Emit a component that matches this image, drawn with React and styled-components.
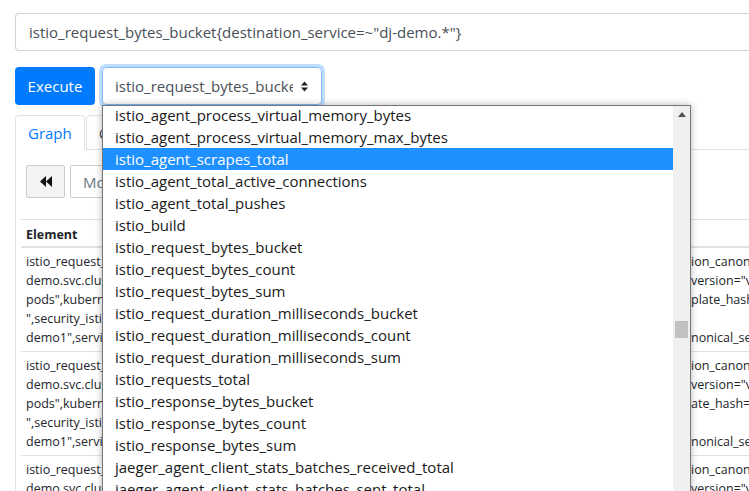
import styled, { createGlobalStyle } from "styled-components";

const metrics = [
  "istio_agent_process_virtual_memory_bytes",
  "istio_agent_process_virtual_memory_max_bytes",
  "istio_agent_scrapes_total",
  "istio_agent_total_active_connections",
  "istio_agent_total_pushes",
  "istio_build",
  "istio_request_bytes_bucket",
  "istio_request_bytes_count",
  "istio_request_bytes_sum",
  "istio_request_duration_milliseconds_bucket",
  "istio_request_duration_milliseconds_count",
  "istio_request_duration_milliseconds_sum",
  "istio_requests_total",
  "istio_response_bytes_bucket",
  "istio_response_bytes_count",
  "istio_response_bytes_sum",
  "jaeger_agent_client_stats_batches_received_total",
  "jaeger_agent_client_stats_batches_sent_total",
  "jaeger_agent_client_stats_batches_total",
];

const seriesRows = [
  {
    lines: [
      ['istio_request_bytes_bucket{app="dj-demo",connection_security_policy="mutual_tls",destination_app="dj-', "ion_canonical_name"],
      ['demo.svc.cluster.local",instance="10.1.2.34:15020",job="kubernetes-', 'version="v1"'],
      ['pods",kubernetes_namespace="dj-demo",kubernetes_pod_name="dj-demo1-7c9d",pod_template_hash', "plate_hash"],
      ['",security_istio_io_tlsMode="istio",service_istio_io_canonical_name="dj-', ""],
      ['demo1",service_istio_io_canonical_revision="v1",source_app="dj-demo1",source_ca', "nonical_service"],
    ],
  },
  {
    lines: [
      ['istio_request_bytes_bucket{app="dj-demo",connection_security_policy="mutual_tls",destination_app="dj-', "ion_canonical_name"],
      ['demo.svc.cluster.local",instance="10.1.2.35:15020",job="kubernetes-', 'version="v1"'],
      ['pods",kubernetes_namespace="dj-demo",kubernetes_pod_name="dj-demo1-7c9d",pod_template_hash', 'ate_hash="'],
      ['",security_istio_io_tlsMode="istio",service_istio_io_canonical_name="dj-', ""],
      ['demo1",service_istio_io_canonical_revision="v1",source_app="dj-demo1",source_ca', "nonical_service"],
    ],
  },
  {
    lines: [
      ['istio_request_bytes_bucket{app="dj-demo",connection_security_policy="mutual_tls",destination_app="dj-', "ion_canonical_name"],
      ['demo.svc.cluster.local",instance="10.1.2.36:15020",job="kubernetes-', 'version="v1"'],
      ['pods",kubernetes_namespace="dj-demo",kubernetes_pod_name="dj-demo1-7c9d",pod_template_hash', "plate_hash"],
    ],
  },
];

export default function App() {
  return (
    <>
      <GlobalStyle />
      <Page>
        <ExpressionInput>
          istio_request_bytes_bucket{"{"}destination_service=~"dj-demo.*"{"}"}
        </ExpressionInput>
        <ControlRow>
          <ExecuteButton>Execute</ExecuteButton>
          <SelectWrap>
            <SelectValue>istio_request_bytes_bucket</SelectValue>
            <svg width="7" height="11" viewBox="0 0 7 11">
              <polygon points="0,4.5 3.5,0.5 7,4.5" fill="#222" />
              <polygon points="0,6.5 3.5,10.5 7,6.5" fill="#222" />
            </svg>
            <Dropdown>
              <Options>
                {metrics.map((m, i) => (
                  <Option key={m} $active={i === 2}>
                    {m}
                  </Option>
                ))}
              </Options>
              <Scrollbar>
                <ScrollArrow>
                  <svg width="8" height="5" viewBox="0 0 8 5">
                    <polygon points="0,5 4,0 8,5" fill="#505050" />
                  </svg>
                </ScrollArrow>
                <Thumb />
              </Scrollbar>
            </Dropdown>
          </SelectWrap>
        </ControlRow>

        <Tabs>
          <Tab $active>Graph</Tab>
          <Tab>Console</Tab>
        </Tabs>
        <Panel>
          <TimeRow>
            <BackButton>
              <svg width="12" height="11" viewBox="0 0 12 11">
                <polygon points="6,0 0,5.5 6,11" fill="#111" />
                <polygon points="12,0 6,5.5 12,11" fill="#111" />
              </svg>
            </BackButton>
            <MomentInput>Moment</MomentInput>
          </TimeRow>
          <Table>
            <HeaderRow>
              <HeaderCell>Element</HeaderCell>
            </HeaderRow>
            {seriesRows.map((row, r) => (
              <Row key={r}>
                {row.lines.map(([left, right], l) => (
                  <Line key={l}>
                    <Chunk>{left}</Chunk>
                    <Chunk>{right}</Chunk>
                  </Line>
                ))}
              </Row>
            ))}
          </Table>
        </Panel>
      </Page>
    </>
  );
}

const GlobalStyle = createGlobalStyle`
  body {
    margin: 0;
    overflow: hidden;
    background: #fff;
    font-family: "Open Sans", "Liberation Sans", sans-serif;
  }
`;

const Page = styled.div`
  width: 800px;
  padding: 13px 0 0 15px;
  box-sizing: border-box;
`;

const ExpressionInput = styled.div`
  height: 38px;
  box-sizing: border-box;
  display: flex;
  align-items: center;
  padding: 0 13px;
  border: 1px solid #ced4da;
  border-right: none;
  border-radius: 4px 0 0 4px;
  font-size: 15px;
  color: #495057;
  white-space: nowrap;
`;

const ControlRow = styled.div`
  display: flex;
  gap: 7px;
  margin-top: 16px;
`;

const ExecuteButton = styled.button`
  width: 80px;
  height: 38px;
  border: none;
  border-radius: 4px;
  background: #007bff;
  color: #fff;
  font-family: inherit;
  font-size: 15px;
  padding: 0;
`;

const SelectWrap = styled.div`
  position: relative;
  width: 220px;
  height: 38px;
  box-sizing: border-box;
  display: flex;
  align-items: center;
  gap: 8px;
  padding: 0 13px 0 12px;
  border: 1px solid #80bdff;
  border-radius: 4px;
  box-shadow: 0 0 0 3px rgba(0, 123, 255, 0.25);
  color: #495057;
  font-size: 15px;
`;

const SelectValue = styled.span`
  flex: 1;
  overflow: hidden;
  white-space: nowrap;
`;

const Dropdown = styled.div`
  position: absolute;
  top: 37px;
  left: -1px;
  width: 589px;
  height: 420px;
  box-sizing: border-box;
  display: flex;
  border: 1px solid #767676;
  background: #fff;
  box-shadow: 0 0 7px rgba(0, 0, 0, 0.3);
  overflow: hidden;
  z-index: 10;
`;

const Options = styled.div`
  flex: 1;
  margin-top: -2px;
`;

const Option = styled.div`
  height: 22px;
  line-height: 22px;
  padding-left: 12px;
  font-size: 15px;
  white-space: nowrap;
  color: ${(p) => (p.$active ? "#fff" : "#1a1a1a")};
  background: ${(p) => (p.$active ? "#1e90ff" : "transparent")};
`;

const Scrollbar = styled.div`
  width: 17px;
  background: #f0f0f0;
  display: flex;
  flex-direction: column;
  align-items: center;
`;

const ScrollArrow = styled.div`
  width: 17px;
  height: 17px;
  display: flex;
  align-items: center;
  justify-content: center;
`;

const Thumb = styled.div`
  width: 13px;
  height: 17px;
  margin-top: 198px;
  background: #c1c1c1;
`;

const Tabs = styled.div`
  display: flex;
  margin-top: 10px;
  border-bottom: 1px solid #dee2e6;
`;

const Tab = styled.div`
  height: 35px;
  box-sizing: border-box;
  margin-bottom: -1px;
  margin-right: 1px;
  padding: 0 12px;
  display: flex;
  align-items: center;
  border: 1px solid #dee2e6;
  border-bottom-color: ${(p) => (p.$active ? "#fff" : "#dee2e6")};
  border-radius: 4px 4px 0 0;
  background: #fff;
  font-size: 15px;
  color: ${(p) => (p.$active ? "#007bff" : "#495057")};
`;

const Panel = styled.div`
  border-left: 1px solid #dee2e6;
  padding: 15px 0 0 5px;
  height: 400px;
`;

const TimeRow = styled.div`
  display: flex;
  gap: 5px;
  padding-left: 5px;
`;

const BackButton = styled.div`
  width: 39px;
  height: 33px;
  box-sizing: border-box;
  display: flex;
  align-items: center;
  justify-content: center;
  background: #f3f3f3;
  border: 1px solid #ccc;
  border-radius: 2px;
`;

const MomentInput = styled.div`
  width: 220px;
  height: 33px;
  box-sizing: border-box;
  display: flex;
  align-items: center;
  padding-left: 12px;
  border: 1px solid #ccc;
  border-radius: 2px;
  font-size: 15px;
  color: #6c757d;
`;

const Table = styled.div`
  margin-top: 21px;
  border-top: 1px solid #dee2e6;
  font-size: 12.5px;
  color: #212529;
`;

const HeaderRow = styled.div`
  border-bottom: 2px solid #dee2e6;
  padding: 5px 5px 2px;
`;

const HeaderCell = styled.div`
  font-weight: 700;
  line-height: 19px;
`;

const Row = styled.div`
  padding: 4px 5px;
  border-bottom: 1px solid #dee2e6;
`;

const Line = styled.div`
  display: grid;
  grid-template-columns: 665px auto;
  line-height: 19px;
  height: 19px;
  white-space: nowrap;
`;

const Chunk = styled.span`
  overflow: hidden;
`;
